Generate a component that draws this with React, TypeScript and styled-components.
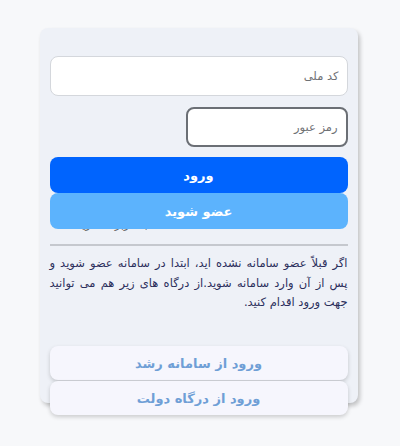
import styled, { createGlobalStyle } from "styled-components";

const GlobalStyle = createGlobalStyle`
  html, body {
    margin: 0;
    padding: 0;
    background: #f7f8fa;
    font-family: "DejaVu Sans", "Noto Sans", sans-serif;
  }
`;

const Page = styled.div`
  width: 400px;
  height: 446px;
  padding-top: 28px;
  box-sizing: border-box;
  display: flex;
  justify-content: center;
`;

const Card = styled.div`
  direction: rtl;
  width: 318px;
  height: 375px;
  box-sizing: border-box;
  margin-left: -3px;
  padding: 28px 10px 0;
  background: #eef1f7;
  border-radius: 8px;
  box-shadow: 2px 3px 4px rgba(0, 0, 0, 0.22);
  display: flex;
  flex-direction: column;
`;

const Input = styled.input<{ $narrow?: boolean; $focused?: boolean }>`
  direction: rtl;
  box-sizing: border-box;
  width: ${({ $narrow }) => ($narrow ? "162px" : "100%")};
  height: 40px;
  padding: 0 8px;
  border-radius: 8px;
  border: ${({ $focused }) =>
    $focused ? "2px solid #6b6f75" : "1px solid #d4d7dc"};
  background: #fff;
  font-family: inherit;
  font-size: 11.5px;
  outline: none;
  &::placeholder {
    color: #6f7175;
  }
`;

const Field = styled.div<{ $gap?: number }>`
  margin-top: ${({ $gap }) => $gap ?? 0}px;
  display: flex;
`;

const ActionButton = styled.button<{ $light?: boolean }>`
  position: relative;
  z-index: 1;
  width: 100%;
  height: 36px;
  border: none;
  border-radius: 8px;
  background: ${({ $light }) => ($light ? "#5cb3fd" : "#0064fe")};
  color: #fff;
  font-family: inherit;
  font-weight: bold;
  font-size: 13px;
`;

const Stack = styled.div`
  margin-top: 10px;
  display: flex;
  flex-direction: column;
`;

/* tucked underneath the sign-up button */
const HiddenHint = styled.div`
  margin-top: -11px;
  padding-right: 176px;
  font-size: 11px;
  line-height: 13px;
  color: #666;
`;

const Divider = styled.hr`
  margin: 13px 0 0;
  border: none;
  border-top: 2px solid #c5c8ce;
`;

const Notice = styled.p`
  margin: 8px 0 0;
  font-size: 11.5px;
  line-height: 19.5px;
  color: #2c2f5c;
  text-align: justify;
`;

const PortalList = styled.div`
  margin-top: auto;
  margin-bottom: -12px;
  display: flex;
  flex-direction: column;
  gap: 1px;
`;

const PortalButton = styled.button`
  width: 100%;
  height: 34px;
  border: none;
  border-radius: 8px;
  background: #f6f6fd;
  color: #6f9fd6;
  font-family: inherit;
  font-weight: bold;
  font-size: 13px;
  box-shadow: 0 2px 4px rgba(0, 0, 0, 0.18);
`;

export default function App() {
  return (
    <>
      <GlobalStyle />
      <Page>
        <Card>
          <Field>
            <Input placeholder="کد ملی" />
          </Field>
          <Field $gap={11}>
            <Input $narrow $focused placeholder="رمز عبور" type="password" />
          </Field>
          <Stack>
            <ActionButton>ورود</ActionButton>
            <ActionButton $light>عضو شوید</ActionButton>
            <HiddenHint>حساب کاربری ندارید؟</HiddenHint>
          </Stack>
          <Divider />
          <Notice>
            اگر قبلاً عضو سامانه نشده اید، ابتدا در سامانه عضو شوید و پس از آن
            وارد سامانه شوید.از درگاه های زیر هم می توانید جهت ورود اقدام کنید.
          </Notice>
          <PortalList>
            <PortalButton>ورود از سامانه رشد</PortalButton>
            <PortalButton>ورود از درگاه دولت</PortalButton>
          </PortalList>
        </Card>
      </Page>
    </>
  );
}
